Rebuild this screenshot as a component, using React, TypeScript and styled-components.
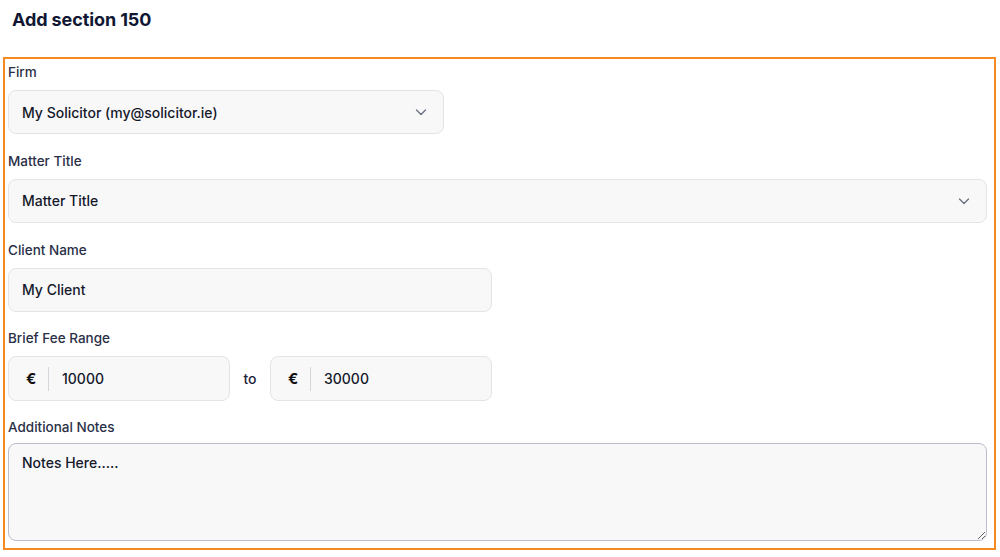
import React from "react";
import styled, { createGlobalStyle } from "styled-components";

const Global = createGlobalStyle`
  html, body { margin: 0; padding: 0; background: #ffffff; }
  body { font-family: Inter, "Noto Sans", sans-serif; color: #1b2138; }
  * { box-sizing: border-box; }
`;

const Page = styled.div`
  width: 1000px;
  padding: 0 4px 0 3px;
`;

const Title = styled.h1`
  margin: 0;
  padding: 9px 0 0 9px;
  height: 57px;
  font-size: 18px;
  line-height: 22px;
  font-weight: 700;
  color: #0f1733;
  letter-spacing: -0.1px;
`;

const FormBox = styled.form`
  border: 2px solid #f58a22;
  height: 493px;
  padding: 3px 7px 0 3px;
  display: flex;
  flex-direction: column;
`;

const Field = styled.div`
  display: flex;
  flex-direction: column;
  margin-bottom: 16.4px;
`;

const Label = styled.label<{ $tight?: boolean }>`
  font-size: 13.5px;
  line-height: 20px;
  font-weight: 500;
  color: #2a3047;
  margin-bottom: ${(p) => (p.$tight ? "6px" : "8px")};
`;

const Control = styled.div<{ $width?: string }>`
  position: relative;
  display: flex;
  align-items: center;
  width: ${(p) => p.$width ?? "100%"};
  height: 44.4px;
  background: #f8f8f9;
  border: 1px solid #e3e4e8;
  border-radius: 8px;
  padding: 0 14px 0 13px;
  font-size: 14px;
  font-weight: 500;
  color: #15192b;
`;

const Value = styled.span`
  flex: 1;
`;

const Chevron = styled.svg`
  width: 12px;
  height: 12px;
  color: #6b7280;
  margin-right: 2px;
`;

const FeeRow = styled.div`
  display: flex;
  align-items: center;
`;

const To = styled.span`
  width: 40px;
  text-align: center;
  font-size: 14px;
  font-weight: 500;
  color: #1b2138;
`;

const Currency = styled.span`
  width: 27px;
  padding-left: 4px;
  font-size: 15px;
  font-weight: 700;
  color: #111;
  border-right: 1px solid #d6d7dc;
  height: 24px;
  display: flex;
  align-items: center;
  margin-right: 13px;
`;

const NotesArea = styled.textarea`
  width: 100%;
  height: 98px;
  background: #f8f8f9;
  border: 1px solid #b9bdcc;
  border-radius: 8px;
  padding: 10px 13px;
  font-family: inherit;
  font-size: 14px;
  font-weight: 500;
  color: #15192b;
  resize: vertical;
  outline: none;
`;

const ChevronIcon = () => (
  <Chevron viewBox="0 0 12 12" fill="none">
    <path d="M1.5 4l4.5 4.5L10.5 4" stroke="currentColor" strokeWidth="1.4" strokeLinecap="round" strokeLinejoin="round" />
  </Chevron>
);

export default function App() {
  return (
    <Page>
      <Global />
      <Title>Add section 150</Title>
      <FormBox onSubmit={(e) => e.preventDefault()}>
        <Field>
          <Label>Firm</Label>
          <Control $width="436px">
            <Value>My Solicitor (my@solicitor.ie)</Value>
            <ChevronIcon />
          </Control>
        </Field>
        <Field>
          <Label>Matter Title</Label>
          <Control>
            <Value>Matter Title</Value>
            <ChevronIcon />
          </Control>
        </Field>
        <Field>
          <Label>Client Name</Label>
          <Control $width="484px">
            <Value>My Client</Value>
          </Control>
        </Field>
        <Field>
          <Label>Brief Fee Range</Label>
          <FeeRow>
            <Control $width="222px">
              <Currency>€</Currency>
              <Value>10000</Value>
            </Control>
            <To>to</To>
            <Control $width="222px">
              <Currency>€</Currency>
              <Value>30000</Value>
            </Control>
          </FeeRow>
        </Field>
        <Field>
          <Label $tight>Additional Notes</Label>
          <NotesArea defaultValue="Notes Here....." />
        </Field>
      </FormBox>
    </Page>
  );
}
